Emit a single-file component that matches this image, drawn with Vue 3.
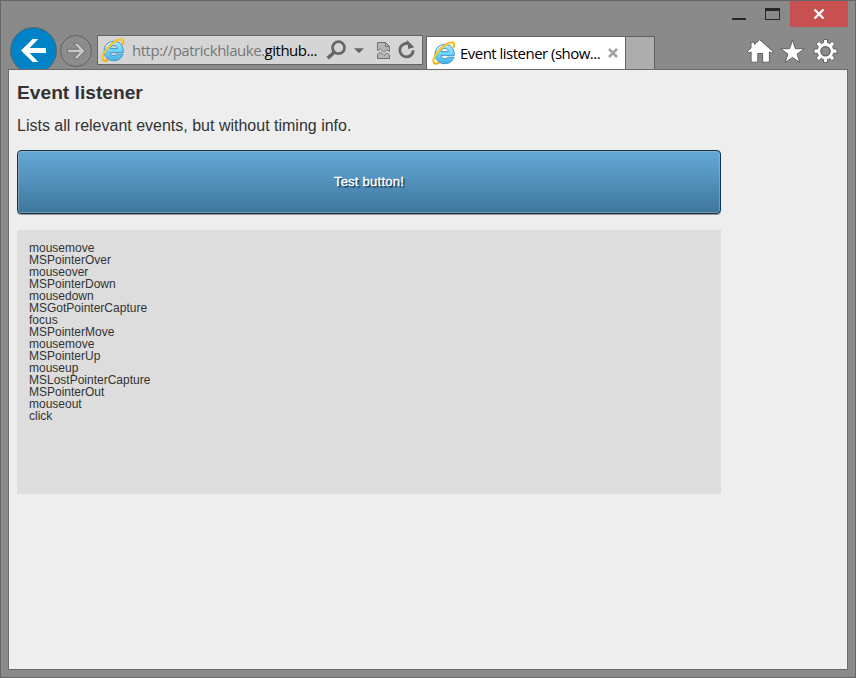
<script setup>
const events = [
  'mousemove', 'MSPointerOver', 'mouseover', 'MSPointerDown', 'mousedown',
  'MSGotPointerCapture', 'focus', 'MSPointerMove', 'mousemove', 'MSPointerUp',
  'mouseup', 'MSLostPointerCapture', 'MSPointerOut', 'mouseout', 'click',
]
</script>

<template>
  <div class="window">
    <svg class="defs" width="0" height="0" aria-hidden="true">
      <defs>
        <linearGradient id="blue" x1="0" y1="0" x2="0" y2="1">
          <stop offset="0" stop-color="#a8e8fb" />
          <stop offset="0.5" stop-color="#6ad4f7" />
          <stop offset="1" stop-color="#45b2e8" />
        </linearGradient>
        <symbol id="ie" viewBox="0 0 24 24">
          <path d="M22.3 14.600H9c.2 1.900 1.600 3 3.700 3 1.400 0 2.400-.5 3.100-1.400h6.100c-1.300 4.200-4.700 6.500-9.100 6.500-5.800 0-9.700-3.900-9.700-9.600S7.200 3.300 12.800 3.300c6 0 9.700 4.300 9.500 11.300zM9.100 10.600h7.200c-.2-2-1.600-3.100-3.500-3.100s-3.400 1.200-3.700 3.100z" fill="url(#blue)" stroke="#3a8dc4" stroke-width=".9" />
          <path d="M4.600 12.200C5.200 7.500 8.500 4.700 13 4.600" fill="none" stroke="#d4f7ff" stroke-width="1.200" />
          <path d="M21.300 6.700C22.700 3.700 22.400 1.700 20.600 1.400 17 .9 10.400 5.400 6 10.700 1.800 15.700.3 20.700 2.300 22.300c1.100.8 3 .4 5-.7" fill="none" stroke="#efab08" stroke-width="2" />
          <path d="M21.400 4.300C21.800 2.500 21.500 1.700 20.500 1.500 17 1 10.500 5.500 6.100 10.800 2.200 15.500.6 20 2.100 21.700" fill="none" stroke="#ffd02c" stroke-width="1.300" />
        </symbol>
      </defs>
    </svg>

    <header class="titlebar">
      <svg class="winbtns" width="64" height="26" viewBox="0 0 64 26">
        <path d="M6 17h14v2H6z" fill="#262626" />
        <path d="M39 7h15v12H39z M40 10v8h13v-8z" fill="#262626" fill-rule="evenodd" />
      </svg>
      <div class="close">
        <svg width="12" height="10" viewBox="0 0 12 10">
          <path d="M1.500.5l9 9M10.500.5l-9 9" stroke="#fff" stroke-width="2.200" />
        </svg>
      </div>
    </header>

    <nav class="toolbar">
      <svg class="back" width="48" height="48" viewBox="0 0 48 48">
        <circle cx="23.500" cy="23.500" r="23" fill="#0083c6" stroke="#5b6469" />
        <path d="M11 23.500L22.700 12h5.600l-8.700 9H36v5H19.600l8.700 9h-5.600z" fill="#fff" />
      </svg>
      <svg class="forward" width="34" height="34" viewBox="0 0 34 34">
        <circle cx="17" cy="17" r="15.500" fill="#8c8c8c" stroke="#636363" />
        <path d="M26 17l-7.500-7.700h-4l5.600 6H8.500v3.400h11.600l-5.600 6h4z" fill="#c8c8c8" stroke="#676767" stroke-width=".8" />
      </svg>
      <div class="address">
        <svg class="ie" width="24" height="24"><use href="#ie" /></svg>
        <span class="url">http://patrickhlauke.<b>github...</b></span>
        <svg class="tools" width="92" height="28" viewBox="0 0 92 28">
          <circle cx="12.500" cy="11.700" r="6" fill="none" stroke="#666" stroke-width="2.700" />
          <path d="M8.500 16l-6.800 6.300" stroke="#666" stroke-width="3.600" />
          <path d="M28 12.300h10l-5 5z" fill="#666" />
          <path d="M51.500 14.500v-8h8l4 4v5l-2.500-1.700-3 2.500-3.500-3.300z" fill="#b5b5b5" stroke="#707070" />
          <path d="M59.500 6.500v4h4" fill="none" stroke="#707070" />
          <path d="M51.500 22.500v-4l3-2.500 3.500 3.500 3-2.500 2.500 2v3.500z" fill="#b5b5b5" stroke="#707070" />
          <path d="M82 7.700A6.700 6.700 0 1 0 87.200 14.200" fill="none" stroke="#666" stroke-width="2.800" />
          <path d="M80.300 4.500h1.200l6.800 6.800-6.300 1.700V9.500z" fill="#666" />
        </svg>
      </div>
      <div class="tab">
        <svg class="ie" width="24" height="24"><use href="#ie" /></svg>
        <span class="tabtitle">Event listener (show...</span>
        <svg class="tabclose" width="10" height="10" viewBox="0 0 10 10">
          <path d="M1 1l8 8M9 1L1 9" stroke="#a3a3a3" stroke-width="2.600" />
        </svg>
      </div>
      <div class="newtab"></div>
      <svg class="actions" width="94" height="28" viewBox="0 0 94 28">
        <g fill="#fff" stroke="#626262" stroke-width="1" stroke-linejoin="round">
          <path d="M12.700 1.700L7.500 6.500V4.300H4V10L.6 13.500l1.500 1.700 2-1.400V24.200h6.700V15.500h4.800v8.700h6.800V13.800l2 1.400 1.500-1.700z" />
          <path d="M45.500 2l2.900 8.700h8.900l-7.200 5.400 2.800 8.400-7.400-5.100-7.400 5.100 2.800-8.400-7.200-5.400h8.900z" />
          <path d="M76.500 1.500h4v3l2.300 1 2.200-2.200 2.800 2.800L85.600 8.500l1 2.500H90v4.300h-3.400l-1 2.400 2.200 2.200-2.800 2.800-2.200-2.200-2.300 1v2.900h-4v-2.900l-2.400-1-2.200 2.200-2.800-2.800 2.200-2.200-1-2.400H67V11h3.300l1-2.500-2.200-2.400 2.800-2.800L74.100 5.500l2.400-1z" />
          <circle cx="78.500" cy="13.200" r="4.600" fill="#8a8a8a" stroke-width="1.400" />
        </g>
      </svg>
    </nav>

    <main class="page">
      <h1>Event listener</h1>
      <p class="intro">Lists all relevant events, but without timing info.</p>
      <button class="test">Test button!</button>
      <div class="log">
        <div v-for="(name, i) in events" :key="i">{{ name }}</div>
      </div>
    </main>
  </div>
</template>

<style>
body { margin: 0; }
</style>

<style scoped>
.window {
  box-sizing: border-box;
  width: 856px;
  height: 678px;
  display: flex;
  flex-direction: column;
  padding: 0 7px 7px;
  border: 1px solid #656565;
  background: #8a8a8a;
  overflow: hidden;
}
.defs { position: absolute; }
.titlebar { height: 26px; display: flex; justify-content: flex-end; flex: none; }
.winbtns { flex: none; display: block; }
.close {
  width: 58px;
  height: 26px;
  display: flex;
  align-items: center;
  justify-content: center;
  background: #c75050;
}
.toolbar {
  height: 42px;
  flex: none;
  display: flex;
  align-items: flex-start;
  overflow: hidden;
  padding-left: 2px;
}
.toolbar svg { display: block; flex: none; }
.back { margin-right: 1px; }
.forward { margin-top: 7px; }
.address {
  box-sizing: border-box;
  width: 326px;
  height: 30px;
  margin: 8px 3px 0 4px;
  padding-left: 3px;
  display: flex;
  align-items: center;
  border: 1px solid #626262;
  background: #d5d5d5;
  font: 15px/28px "Open Sans", sans-serif;
}
.url { width: 186px; flex: none; margin-left: 7px; color: #777; white-space: nowrap; letter-spacing: -0.48px; }
.url b { font-weight: 400; color: #000; }
.tools { margin-left: 8px; }
.tab {
  box-sizing: border-box;
  width: 200px;
  height: 33px;
  margin-top: 9px;
  padding-left: 5px;
  display: flex;
  align-items: center;
  border: solid #626262;
  border-width: 1px 1px 0;
  background: #fff;
  font: 15px/32px "Open Sans", sans-serif;
  color: #000;
}
.tabtitle { width: 142px; flex: none; margin-left: 4px; white-space: nowrap; letter-spacing: -0.52px; }
.tabclose { margin-left: 6px; }
.newtab {
  box-sizing: border-box;
  width: 29px;
  height: 33px;
  margin-top: 9px;
  border: solid #626262;
  border-width: 1px 1px 0 0;
  background: #adadad;
}
.actions { margin: 11px 7px 0 auto; }
.page {
  flex: 1;
  box-sizing: border-box;
  position: relative;
  border: 1px solid #6a6a6a;
  background: #eee;
  padding: 0 8px;
  font-family: "Liberation Sans", Arial, sans-serif;
  color: #333;
}
h1 { margin: 11px 0 0; font-size: 19.2px; line-height: 24px; }
.intro { margin: 9px 0 0; font-size: 16px; line-height: 24px; }
.test {
  display: block;
  box-sizing: border-box;
  width: 704px;
  height: 64px;
  margin: 12px 0 0;
  padding: 0;
  border: 1px solid #0b3550;
  border-radius: 4px;
  background: linear-gradient(#65a9d7, #3e779d);
  box-shadow: inset 0 0 0 1px rgba(180, 180, 180, .5), 0 1px 0 #9a9a9a;
  font: 13px/16px "Liberation Sans", Arial, sans-serif;
  letter-spacing: 0.25px;
  color: #fff;
  -webkit-text-stroke: 0.4px #fff;
  text-shadow: 1px 1px 0 #0b3550, 2px 2px 1px rgba(11, 53, 80, .6);
}
.log {
  box-sizing: border-box;
  width: 704px;
  height: 264px;
  margin-top: 16px;
  padding: 12px;
  background: #ddd;
  font-size: 12px;
  line-height: 12px;
}
</style>
